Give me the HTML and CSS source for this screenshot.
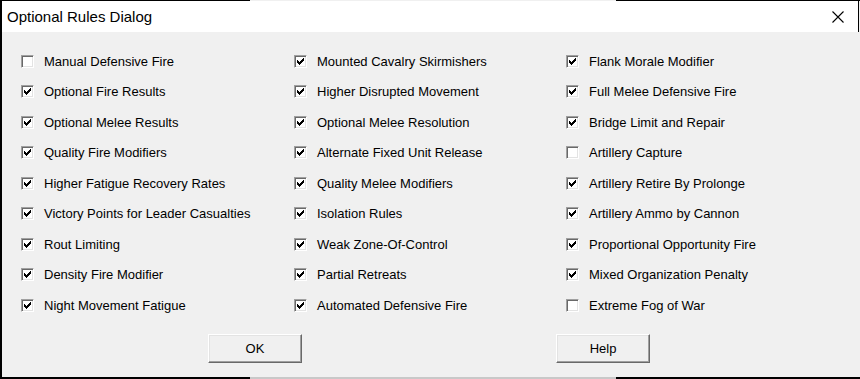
FILE: index.html
```html
<!DOCTYPE html>
<html lang="en">
<head>
    <meta charset="UTF-8">
    <title>Optional Rules Dialog</title>
    <link rel="stylesheet" href="styles.css">
</head>
<body>
<div class="window">
    <div class="titlebar">
        <span class="title">Optional Rules Dialog</span>
        <span class="close">
            <svg width="12" height="12" viewBox="0 0 12 12"><path d="M0.5 0.5 L11.5 11.5 M11.5 0.5 L0.5 11.5" stroke="#000" stroke-width="1.1" fill="none"/></svg>
        </span>
    </div>
    <div class="content">
        <div class="rules" id="rules"></div>
        <div class="actions">
            <button class="btn btn-ok">OK</button>
            <button class="btn btn-help">Help</button>
        </div>
    </div>
</div>

<script>
    const rules = [
        ['Manual Defensive Fire', false],
        ['Optional Fire Results', true],
        ['Optional Melee Results', true],
        ['Quality Fire Modifiers', true],
        ['Higher Fatigue Recovery Rates', true],
        ['Victory Points for Leader Casualties', true],
        ['Rout Limiting', true],
        ['Density Fire Modifier', true],
        ['Night Movement Fatigue', true],
        ['Mounted Cavalry Skirmishers', true],
        ['Higher Disrupted Movement', true],
        ['Optional Melee Resolution', true],
        ['Alternate Fixed Unit Release', true],
        ['Quality Melee Modifiers', true],
        ['Isolation Rules', true],
        ['Weak Zone-Of-Control', true],
        ['Partial Retreats', true],
        ['Automated Defensive Fire', true],
        ['Flank Morale Modifier', true],
        ['Full Melee Defensive Fire', true],
        ['Bridge Limit and Repair', true],
        ['Artillery Capture', false],
        ['Artillery Retire By Prolonge', true],
        ['Artillery Ammo by Cannon', true],
        ['Proportional Opportunity Fire', true],
        ['Mixed Organization Penalty', true],
        ['Extreme Fog of War', false]
    ];

    // classic 7x7 check: each column is 3px tall
    const check_svg = '<svg width="7" height="7" viewBox="0 0 7 7" shape-rendering="crispEdges" fill="#000">'
        + '<rect x="0" y="2" width="1" height="3"/><rect x="1" y="3" width="1" height="3"/>'
        + '<rect x="2" y="4" width="1" height="3"/><rect x="3" y="3" width="1" height="3"/>'
        + '<rect x="4" y="2" width="1" height="3"/><rect x="5" y="1" width="1" height="3"/>'
        + '<rect x="6" y="0" width="1" height="3"/></svg>';

    const list = document.getElementById('rules');
    rules.forEach(function (rule) {
        const item = document.createElement('label');
        item.className = 'rule';
        item.innerHTML = '<span class="box">' + (rule[1] ? check_svg : '') + '</span><span class="text">' + rule[0] + '</span>';
        item.addEventListener('click', function () {
            rule[1] = !rule[1];
            item.querySelector('.box').innerHTML = rule[1] ? check_svg : '';
        });
        list.appendChild(item);
    });
</script>
</body>
</html>
```

FILE: styles.css
```css
body {
    margin: 0;
    background-color: #f0f0f0;
    font-family: "Liberation Sans", Arial, sans-serif;
}
.window {
    position: relative;
    width: 860px;
    height: 379px;
    box-sizing: border-box;
    border-left: 2px solid #000;
    background-color: #f0f0f0;
}
.window::before {
    content: "";
    position: absolute;
    top: 0;
    left: 0;
    right: 0;
    height: 1px;
    background: linear-gradient(to right, #000 248px, #f0f0f0 248px, #f0f0f0 614px, #000 614px);
}
.window::after {
    content: "";
    position: absolute;
    bottom: 0;
    left: -2px;
    right: 0;
    height: 2px;
    background: linear-gradient(to right, #000 250px, #c8c8c8 250px, #c8c8c8 616px, #000 616px);
}
.titlebar {
    height: 32px;
    background-color: #fff;
    border-right: 1px solid #000;
    margin-right: 1px;
    display: flex;
    align-items: center;
    justify-content: space-between;
    padding: 1px 0 0 5px;
    box-sizing: border-box;
}
.title {
    font-size: 15px;
    color: #000;
}
.close {
    display: flex;
    margin-right: 14px;
}
.content {
    padding: 14px 0 0 19px;
}
.rules {
    display: grid;
    grid-auto-flow: column;
    grid-template-rows: repeat(9, 30.5px);
    grid-template-columns: 273px 272px 260px;
}
.rule {
    display: flex;
    align-items: center;
    font-size: 13px;
    color: #000;
    cursor: default;
}
.box {
    width: 13px;
    height: 13px;
    box-sizing: border-box;
    border: 1px solid;
    border-color: #a0a0a0 #fff #fff #a0a0a0;
    box-shadow: inset 1px 1px #696969, inset -1px -1px #e3e3e3;
    background-color: #fff;
    display: flex;
    align-items: center;
    justify-content: center;
    margin-right: 10px;
    flex-shrink: 0;
}
.box svg {
    display: block;
}
.actions {
    display: flex;
    margin-top: 13px;
    padding-left: 187px;
    gap: 254px;
}
.btn {
    width: 94px;
    height: 29px;
    font-family: "Liberation Sans", Arial, sans-serif;
    font-size: 13px;
    color: #000;
    background-color: #f0f0f0;
    border: 1px solid;
    border-color: #fff #696969 #696969 #fff;
    box-shadow: inset -1px -1px #a0a0a0, inset 1px 1px #e3e3e3;
    padding: 0;
    cursor: pointer;
}
.btn:active {
    background-color: #e0e0e0;
}
```
